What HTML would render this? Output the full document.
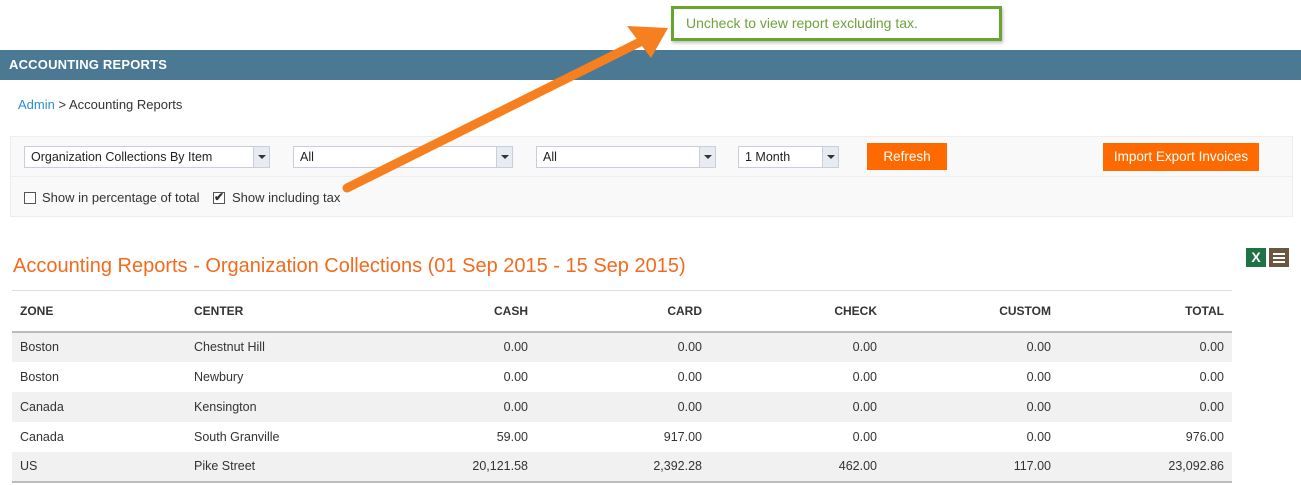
<!DOCTYPE html>
<html><head><meta charset="utf-8"><style>
*{box-sizing:border-box;margin:0;padding:0}
body{width:1301px;height:485px;overflow:hidden;background:#fff;font-family:"Liberation Sans Narrow","Liberation Sans",sans-serif;font-size:13px;color:#333;position:relative}
.abs{position:absolute}
.hdr{left:0;top:50px;width:1301px;height:30px;background:#4b7893;color:#fff;font-weight:bold;font-size:13px;padding:7px 9px;letter-spacing:.2px}
.tip{left:671px;top:6px;width:331px;height:35px;border:3px solid #67a52f;background:#fff;color:#6ba43a;font-size:14px;padding:6px 12px;box-shadow:1px 2px 3px rgba(0,0,0,.25)}
.panel{left:10px;top:136px;width:1283px;height:81px;background:#f9f9f9;border:1px solid #eee}
.div{left:11px;top:176px;width:1281px;height:1px;background:#eee}
.sel{height:22px;top:146px;background:#fff;border:1px solid #ccd;font-size:12.5px;padding:3px 6px;color:#222}
.sel i{position:absolute;right:0;top:0;width:16px;height:20px;background:#e6ecf2;border-left:1px solid #ccd}
.sel i:after{content:"";position:absolute;left:4px;top:8px;border:4px solid transparent;border-top:4px solid #333;border-bottom:0}
.btn{background:#ff6a00;color:#fff;font-size:13.5px;text-align:center;top:143px;height:27px;padding-top:6px}
.cb{width:12px;height:12px;border:1px solid #555;background:#fff;top:192px}
.lbl{top:190px;font-size:13px;color:#333}
.title{left:13px;top:255px;color:#f26b1d;font-size:20px}
table{position:absolute;left:12px;top:290px;width:1220px;border-collapse:collapse;border-top:1px solid #ddd;border-bottom:2px solid #bbb;table-layout:fixed}
th{height:41px;font-size:12px;font-weight:bold;text-align:left;padding:0 8px;border-bottom:2px solid #bbb;color:#333}
td{height:30px;padding:0 8px;font-size:12.5px}
tr:nth-child(even) td{background:#f1f1f1}
.r{text-align:right}
</style></head><body>
<div class="abs tip">Uncheck to view report excluding tax.</div>
<div class="abs hdr">ACCOUNTING REPORTS</div>
<div class="abs" style="left:18px;top:97px"><span style="color:#2a8fcf">Admin</span> &gt; Accounting Reports</div>
<div class="abs panel"></div>
<div class="abs div"></div>
<div class="abs sel" style="left:24px;width:246px">Organization Collections By Item<i></i></div>
<div class="abs sel" style="left:293px;width:220px">All<i></i></div>
<div class="abs sel" style="left:536px;width:180px">All<i></i></div>
<div class="abs sel" style="left:738px;width:101px">1 Month<i></i></div>
<div class="abs btn" style="left:867px;width:80px">Refresh</div>
<div class="abs btn" style="left:1103px;width:156px;height:28px">Import Export Invoices</div>
<div class="abs cb" style="left:24px"></div>
<div class="abs lbl" style="left:42px">Show in percentage of total</div>
<div class="abs cb" style="left:213px;font-size:12px;line-height:9px;text-align:center;font-weight:bold">✔</div>
<div class="abs lbl" style="left:232px">Show including tax</div>
<svg class="abs" style="left:0;top:0" width="700" height="200"><line x1="347" y1="188" x2="640" y2="42" stroke="#f6801f" stroke-width="9" stroke-linecap="round"/><polygon points="668,28 627,26 651,58" fill="#f6801f"/></svg>
<div class="abs title">Accounting Reports - Organization Collections (01 Sep 2015 - 15 Sep 2015)</div>
<div class="abs" style="left:1246px;top:248px;width:20px;height:19px;background:#1f7244;color:#fff;font-weight:bold;font-size:14px;text-align:center;line-height:19px">X</div>
<div class="abs" style="left:1269px;top:248px;width:20px;height:19px;background:#6b5640"><div style="position:absolute;left:4px;top:5px;width:12px;height:2px;background:#fff;box-shadow:0 4px 0 #fff,0 8px 0 #fff"></div></div>
<table>
<colgroup><col style="width:174px"><col style="width:174px"><col style="width:176px"><col style="width:174px"><col style="width:175px"><col style="width:174px"><col style="width:173px"></colgroup>
<tr><th>ZONE</th><th>CENTER</th><th class="r">CASH</th><th class="r">CARD</th><th class="r">CHECK</th><th class="r">CUSTOM</th><th class="r">TOTAL</th></tr>
<tr><td>Boston</td><td>Chestnut Hill</td><td class="r">0.00</td><td class="r">0.00</td><td class="r">0.00</td><td class="r">0.00</td><td class="r">0.00</td></tr>
<tr><td>Boston</td><td>Newbury</td><td class="r">0.00</td><td class="r">0.00</td><td class="r">0.00</td><td class="r">0.00</td><td class="r">0.00</td></tr>
<tr><td>Canada</td><td>Kensington</td><td class="r">0.00</td><td class="r">0.00</td><td class="r">0.00</td><td class="r">0.00</td><td class="r">0.00</td></tr>
<tr><td>Canada</td><td>South Granville</td><td class="r">59.00</td><td class="r">917.00</td><td class="r">0.00</td><td class="r">0.00</td><td class="r">976.00</td></tr>
<tr><td>US</td><td>Pike Street</td><td class="r">20,121.58</td><td class="r">2,392.28</td><td class="r">462.00</td><td class="r">117.00</td><td class="r">23,092.86</td></tr>
</table>
</body></html>
